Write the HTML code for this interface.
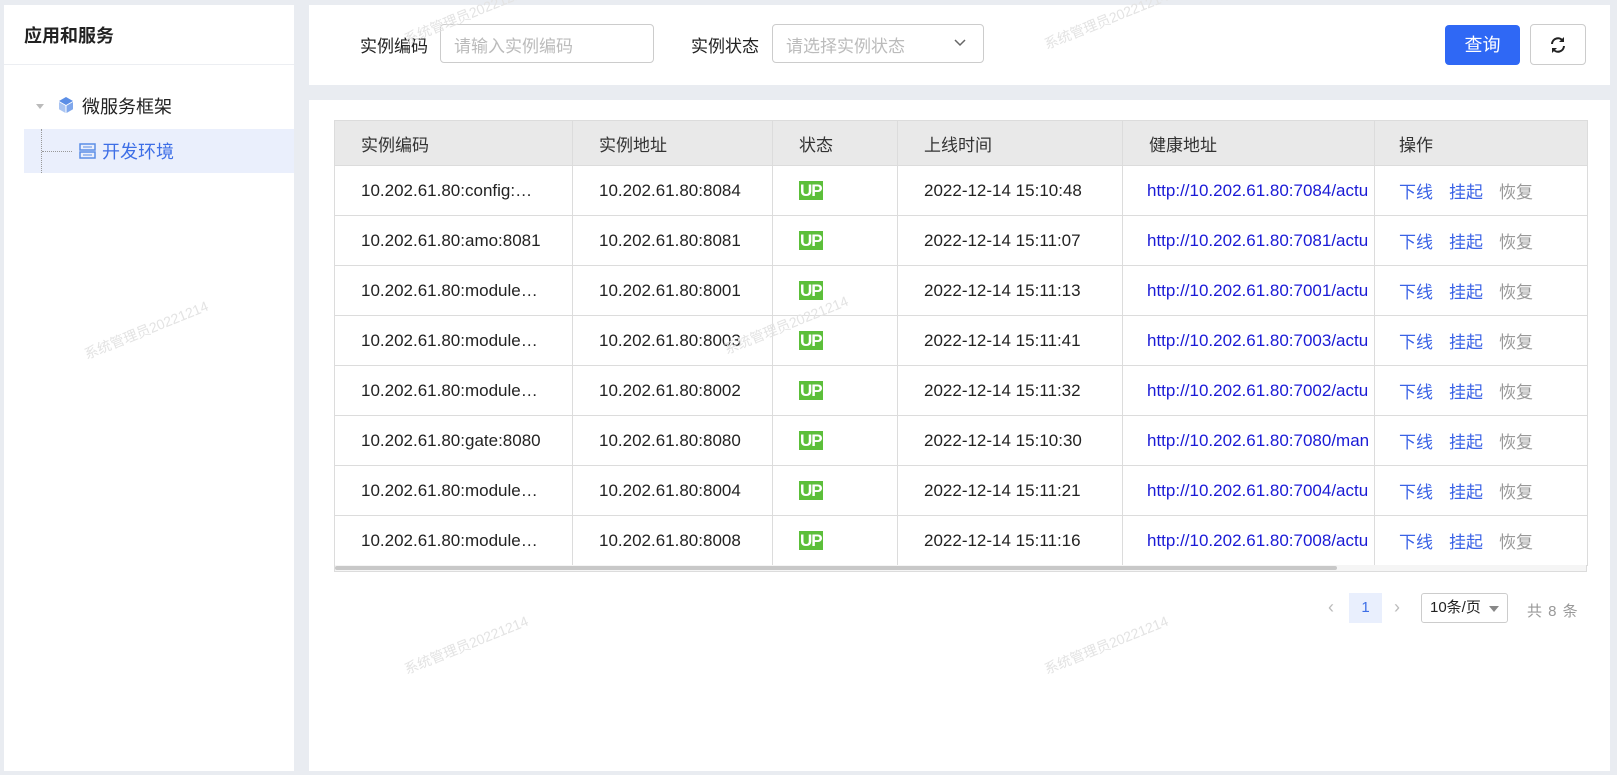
<!DOCTYPE html>
<html><head><meta charset="utf-8"><style>
*{box-sizing:border-box;margin:0;padding:0}
body{width:1617px;height:775px;background:#e9ecf1;font-family:"Liberation Sans","Noto Sans CJK SC",sans-serif;font-size:17px;color:#222;position:relative;overflow:hidden}
.abs{position:absolute}
.panel{position:absolute;background:#fff}
.wm{position:absolute;color:#e3e3e3;font-size:14px;transform:rotate(-22deg);white-space:nowrap;pointer-events:none;z-index:5}
table{border-collapse:collapse;table-layout:fixed;position:absolute;left:334px;top:120px;width:1253px}
th,td{border:1px solid #dcdcdc;height:50px;padding-left:26px;text-align:left;font-weight:normal;white-space:nowrap;overflow:hidden}
th{height:45px;background:#e9e9e9;color:#333}
td.up span{background:#5cbf3a;color:#fff;font-weight:bold;font-size:17px;padding:0 1px;letter-spacing:-1px}
td.lnk{color:#1a1ad6;padding-left:24px}
td.op{color:#3a62e6;padding-left:24px;box-shadow:-6px 0 8px -6px rgba(0,0,0,.12)}
td.op i{font-style:normal;margin-right:16px}
td.op i.g{color:#999}
</style></head><body>
<div class="panel" style="left:4px;top:5px;width:290px;height:766px">
 <div class="abs" style="left:20px;top:17px;font-size:18px;font-weight:bold;color:#222">应用和服务</div>
 <div class="abs" style="left:0;top:59px;width:290px;height:1px;background:#eceef2"></div>
 <div class="abs" style="left:32px;top:99px;width:0;height:0;border-left:4px solid transparent;border-right:4px solid transparent;border-top:5px solid #bbb"></div>
 <svg class="abs" style="left:53px;top:91px" width="18" height="18" viewBox="0 0 18 18"><path d="M9 1L16 5L9 9L2 5Z" fill="#5b8ee6"/><path d="M2 6L8.5 9.7V17L2 13.3Z" fill="#a9c4f2"/><path d="M16 6L9.5 9.7V17L16 13.3Z" fill="#7fa7ec"/></svg>
 <div class="abs" style="left:78px;top:88px;font-size:18px;color:#222">微服务框架</div>
 <div class="abs" style="left:20px;top:124px;width:270px;height:44px;background:#eaeffc"></div>
 <div class="abs" style="left:37px;top:124px;height:44px;border-left:1px dotted #999"></div>
 <div class="abs" style="left:38px;top:146px;width:30px;border-top:1px dotted #999"></div>
 <svg class="abs" style="left:75px;top:138px" width="17" height="16" viewBox="0 0 17 16"><rect x="1" y="1" width="15" height="6" fill="none" stroke="#5b8ee6" stroke-width="1.5"/><rect x="1" y="9" width="15" height="6" fill="none" stroke="#5b8ee6" stroke-width="1.5"/><line x1="4" y1="4" x2="13" y2="4" stroke="#5b8ee6"/><line x1="4" y1="12" x2="13" y2="12" stroke="#5b8ee6"/></svg>
 <div class="abs" style="left:98px;top:133px;font-size:18px;color:#3d6ee6">开发环境</div>
</div>
<div class="panel" style="left:309px;top:5px;width:1301px;height:80px">
 <div class="abs" style="left:51px;top:27px;color:#222">实例编码</div>
 <div class="abs" style="left:131px;top:19px;width:214px;height:39px;border:1px solid #ccc;border-radius:4px;color:#bbb;padding:7px 0 0 13px">请输入实例编码</div>
 <div class="abs" style="left:382px;top:27px;color:#222">实例状态</div>
 <div class="abs" style="left:463px;top:19px;width:212px;height:39px;border:1px solid #ccc;border-radius:4px;color:#bbb;padding:7px 0 0 13px">请选择实例状态</div>
 <svg class="abs" style="left:645px;top:34px" width="12" height="8" viewBox="0 0 12 8"><path d="M1 1L6 6L11 1" fill="none" stroke="#666" stroke-width="1.5"/></svg>
 <div class="abs" style="left:1136px;top:20px;width:75px;height:40px;background:#2f68f5;border-radius:4px;color:#fff;font-size:18px;text-align:center;line-height:40px">查询</div>
 <div class="abs" style="left:1221px;top:19px;width:56px;height:41px;border:1px solid #ccc;border-radius:4px"></div>
 <svg class="abs" style="left:1240px;top:31px" width="18" height="18" viewBox="0 0 18 18"><path d="M3 8A6 6 0 0 1 14 5" fill="none" stroke="#222" stroke-width="2"/><path d="M15 10A6 6 0 0 1 4 13" fill="none" stroke="#222" stroke-width="2"/><path d="M15 1V6H10Z" fill="#222"/><path d="M3 17V12H8Z" fill="#222"/></svg>
</div>
<div class="panel" style="left:309px;top:100px;width:1301px;height:671px"></div>
<table>
<colgroup><col style="width:238px"><col style="width:200px"><col style="width:125px"><col style="width:225px"><col style="width:252px"><col style="width:213px"></colgroup>
<tr><th>实例编码</th><th>实例地址</th><th>状态</th><th>上线时间</th><th>健康地址</th><th style="padding-left:24px">操作</th></tr>
<tr><td>10.202.61.80:config:…</td><td>10.202.61.80:8084</td><td class="up"><span>UP</span></td><td>2022-12-14 15:10:48</td><td class="lnk">http://10.202.61.80:7084/actu</td><td class="op"><i>下线</i><i>挂起</i><i class="g">恢复</i></td></tr>
<tr><td>10.202.61.80:amo:8081</td><td>10.202.61.80:8081</td><td class="up"><span>UP</span></td><td>2022-12-14 15:11:07</td><td class="lnk">http://10.202.61.80:7081/actu</td><td class="op"><i>下线</i><i>挂起</i><i class="g">恢复</i></td></tr>
<tr><td>10.202.61.80:module…</td><td>10.202.61.80:8001</td><td class="up"><span>UP</span></td><td>2022-12-14 15:11:13</td><td class="lnk">http://10.202.61.80:7001/actu</td><td class="op"><i>下线</i><i>挂起</i><i class="g">恢复</i></td></tr>
<tr><td>10.202.61.80:module…</td><td>10.202.61.80:8003</td><td class="up"><span>UP</span></td><td>2022-12-14 15:11:41</td><td class="lnk">http://10.202.61.80:7003/actu</td><td class="op"><i>下线</i><i>挂起</i><i class="g">恢复</i></td></tr>
<tr><td>10.202.61.80:module…</td><td>10.202.61.80:8002</td><td class="up"><span>UP</span></td><td>2022-12-14 15:11:32</td><td class="lnk">http://10.202.61.80:7002/actu</td><td class="op"><i>下线</i><i>挂起</i><i class="g">恢复</i></td></tr>
<tr><td>10.202.61.80:gate:8080</td><td>10.202.61.80:8080</td><td class="up"><span>UP</span></td><td>2022-12-14 15:10:30</td><td class="lnk">http://10.202.61.80:7080/man</td><td class="op"><i>下线</i><i>挂起</i><i class="g">恢复</i></td></tr>
<tr><td>10.202.61.80:module…</td><td>10.202.61.80:8004</td><td class="up"><span>UP</span></td><td>2022-12-14 15:11:21</td><td class="lnk">http://10.202.61.80:7004/actu</td><td class="op"><i>下线</i><i>挂起</i><i class="g">恢复</i></td></tr>
<tr><td>10.202.61.80:module…</td><td>10.202.61.80:8008</td><td class="up"><span>UP</span></td><td>2022-12-14 15:11:16</td><td class="lnk">http://10.202.61.80:7008/actu</td><td class="op"><i>下线</i><i>挂起</i><i class="g">恢复</i></td></tr>
</table>
<div class="abs" style="left:334px;top:565px;width:1253px;height:7px;border:1px solid #dcdcdc;border-top:none;background:#f5f5f5"></div>
<div class="abs" style="left:335px;top:566px;width:1002px;height:4px;background:#c8c8c8;border-radius:2px"></div>
<div class="abs" style="left:1328px;top:597px;color:#bbb;font-size:18px">‹</div>
<div class="abs" style="left:1349px;top:593px;width:33px;height:30px;background:#e9effd;color:#3d6ee6;text-align:center;line-height:30px;font-size:15px">1</div>
<div class="abs" style="left:1394px;top:597px;color:#bbb;font-size:18px">›</div>
<div class="abs" style="left:1421px;top:593px;width:87px;height:30px;border:1px solid #ccc;border-radius:3px;font-size:15px;line-height:28px;padding-left:8px">10条/页</div>
<div class="abs" style="left:1489px;top:606px;border-left:5px solid transparent;border-right:5px solid transparent;border-top:6px solid #888"></div>
<div class="abs" style="left:1527px;top:600px;color:#999;font-size:15px;letter-spacing:1px">共 8 条</div>
<div class="wm" style="left:80px;top:320px">系统管理员20221214</div>
<div class="wm" style="left:720px;top:315px">系统管理员20221214</div>
<div class="wm" style="left:400px;top:635px">系统管理员20221214</div>
<div class="wm" style="left:1040px;top:635px">系统管理员20221214</div>
<div class="wm" style="left:1040px;top:10px">系统管理员20221214</div>
<div class="wm" style="left:400px;top:5px">系统管理员20221214</div>
</body></html>
